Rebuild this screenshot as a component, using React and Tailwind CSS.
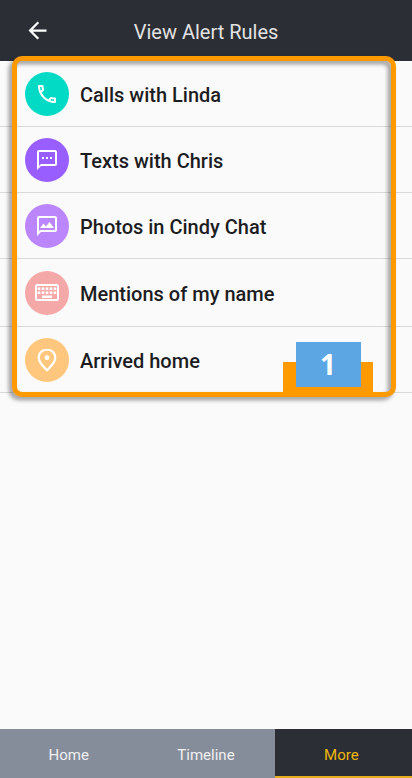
import React from 'react';
import { MdArrowBack, MdOutlinePhone, MdOutlineTextsms, MdOutlineMms } from 'react-icons/md';

const keyColumns = [4, 8, 12, 16, 20];
const keyRows = [4, 8];

function KeyboardIcon({ className }) {
  return (
    <svg viewBox="0 0 24 17" className={className} fill="none" aria-hidden="true">
      <rect x="1" y="1" width="22" height="15" rx="1.5" stroke="currentColor" strokeWidth="2" />
      {keyRows.map((y) =>
        keyColumns.map((x) => (
          <rect key={`${x}-${y}`} x={x - 1.3} y={y - 0.6} width="2.600" height="2.600" fill="currentColor" />
        ))
      )}
      <rect x="7" y="11.500" width="10" height="2.500" fill="currentColor" />
    </svg>
  );
}

function PinIcon({ className }) {
  return (
    <svg viewBox="0 0 20 24" className={className} fill="none" aria-hidden="true">
      <path
        d="M10 1.5C5.200 1.500 1.700 5.100 1.700 9.600C1.700 14.200 5.300 17.700 10 22.300C14.700 17.700 18.300 14.200 18.300 9.600C18.300 5.100 14.800 1.500 10 1.500Z"
        stroke="currentColor"
        strokeWidth="2.200"
      />
      <circle cx="10" cy="9.700" r="2.400" fill="currentColor" />
    </svg>
  );
}

const rules = [
  { label: 'Calls with Linda', color: 'bg-[#03dac5]', height: 'h-[66px]', icon: <MdOutlinePhone className="size-6" /> },
  { label: 'Texts with Chris', color: 'bg-[#985eff]', height: 'h-[66px]', icon: <MdOutlineTextsms className="size-6" /> },
  { label: 'Photos in Cindy Chat', color: 'bg-[#bb86fc]', height: 'h-[66px]', icon: <MdOutlineMms className="size-6" /> },
  { label: 'Mentions of my name', color: 'bg-[#f4a9a8]', height: 'h-[68px]', icon: <KeyboardIcon className="h-[17px] w-6" /> },
  { label: 'Arrived home', color: 'bg-[#ffc77d]', height: 'h-[66px]', icon: <PinIcon className="h-6 w-5" /> },
];

function RuleRow({ rule }) {
  return (
    <li className={`border-b border-[#d9d9d9] ${rule.height}`}>
      <a href="#rule" className="flex h-full items-center gap-[11px] pl-[25px]">
        <span className={`flex size-11 shrink-0 items-center justify-center rounded-full text-white ${rule.color}`}>
          {rule.icon}
        </span>
        <span className="pt-0.5 text-xl leading-6 font-medium text-[#1d1d1f]">{rule.label}</span>
      </a>
    </li>
  );
}

export default function App() {
  return (
    <div className="flex min-h-screen flex-col bg-[#fafafa] font-['Roboto',sans-serif]">
      <header className="grid h-[61px] grid-cols-[72px_1fr_72px] items-center bg-[#2b2e34]">
        <button type="button" aria-label="Back" className="ml-6 w-7 text-white">
          <MdArrowBack className="size-[27px]" />
        </button>
        <h1 className="pt-0.5 text-center text-xl leading-6 text-[#e2e2e2]">View Alert Rules</h1>
      </header>

      <main className="relative flex-1">
        <ul>
          {rules.map((rule) => (
            <RuleRow key={rule.label} rule={rule} />
          ))}
        </ul>
        <div className="pointer-events-none absolute -top-[5px] right-4 left-3 h-[341px] rounded-[10px] border-[5px] border-[#ff9900] drop-shadow-[-3px_3px_2px_rgba(0,0,0,0.4)]" />
        <div className="absolute top-[281px] right-[39px] flex h-[51px] w-[90px] flex-col items-center justify-end">
          <div className="h-[31px] w-full bg-[#ff9900]" />
          <span className="absolute top-0 flex h-[45px] w-[65px] items-center justify-center bg-[#5ca6e4] pb-0.5 font-['Open_Sans',sans-serif] text-[28px] leading-8 font-bold text-white">
            1
          </span>
        </div>
      </main>

      <nav className="grid h-[49px] grid-cols-3 bg-[#868d9a] text-center text-[15px] leading-5">
        <a href="#home" className="flex items-center justify-center pt-[3px] text-[#f0f0f2]">Home</a>
        <a href="#timeline" className="flex items-center justify-center pt-[3px] text-[#f0f0f2]">Timeline</a>
        <a href="#more" aria-current="page" className="flex items-center justify-center border-b-2 border-[#e6ae1c] bg-[#2b2e34] pt-[5px] pr-1 text-[#efb70c]">
          More
        </a>
      </nav>
    </div>
  );
}
